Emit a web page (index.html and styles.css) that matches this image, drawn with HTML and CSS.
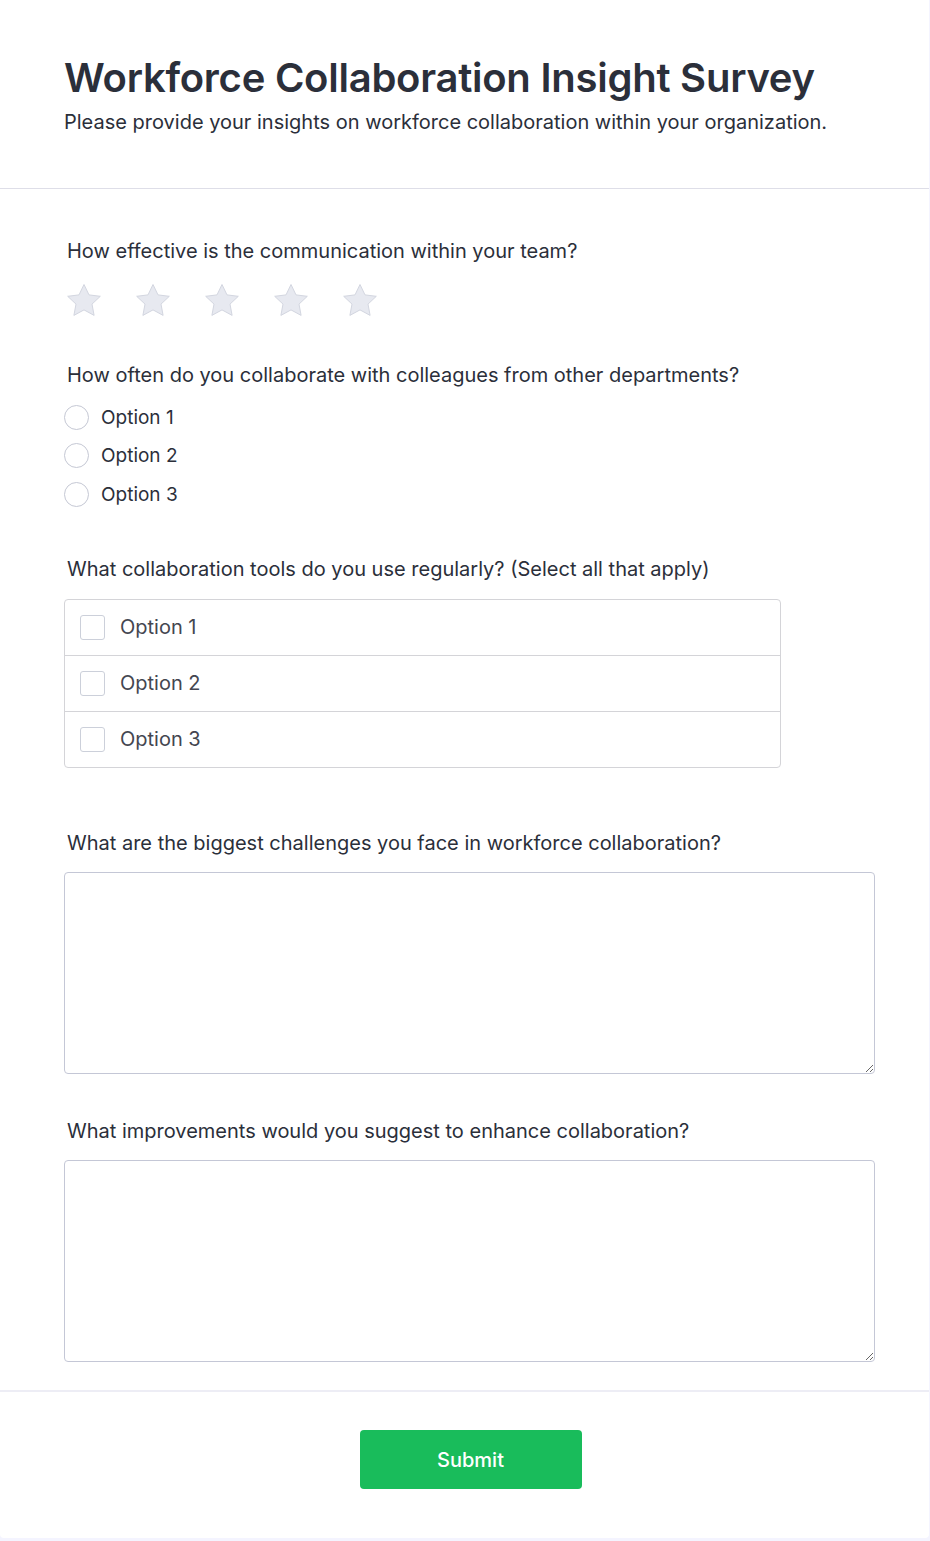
FILE: index.html
```html
<!DOCTYPE html>
<html lang="en">
<head>
<meta charset="utf-8">
<title>Workforce Collaboration Insight Survey</title>
<link rel="stylesheet" href="styles.css">
</head>
<body>
<div class="page">
  <form class="card">
    <header class="head">
      <h1 class="title">Workforce Collaboration Insight Survey</h1>
      <p class="subtitle">Please provide your insights on workforce collaboration within your organization.</p>
    </header>
    <div class="body">
      <section class="q q-rating">
        <h2 class="q-title">How effective is the communication within your team?</h2>
        <div class="stars">
          <svg class="star" viewBox="0 0 40 40"><path d="M20 3.5l5 10.4 11.3 1.4-8.3 7.8 2.1 11.3L20 28.9l-10.1 5.5 2.1-11.3-8.3-7.8 11.3-1.4z"/></svg>
          <svg class="star" viewBox="0 0 40 40"><path d="M20 3.5l5 10.4 11.3 1.4-8.3 7.8 2.1 11.3L20 28.9l-10.1 5.5 2.1-11.3-8.3-7.8 11.3-1.4z"/></svg>
          <svg class="star" viewBox="0 0 40 40"><path d="M20 3.5l5 10.4 11.3 1.4-8.3 7.8 2.1 11.3L20 28.9l-10.1 5.5 2.1-11.3-8.3-7.8 11.3-1.4z"/></svg>
          <svg class="star" viewBox="0 0 40 40"><path d="M20 3.5l5 10.4 11.3 1.4-8.3 7.8 2.1 11.3L20 28.9l-10.1 5.5 2.1-11.3-8.3-7.8 11.3-1.4z"/></svg>
          <svg class="star" viewBox="0 0 40 40"><path d="M20 3.5l5 10.4 11.3 1.4-8.3 7.8 2.1 11.3L20 28.9l-10.1 5.5 2.1-11.3-8.3-7.8 11.3-1.4z"/></svg>
        </div>
      </section>

      <section class="q q-radio">
        <h2 class="q-title">How often do you collaborate with colleagues from other departments?</h2>
        <div class="radios">
          <label class="radio"><span class="circle"></span><span>Option 1</span></label>
          <label class="radio"><span class="circle"></span><span>Option 2</span></label>
          <label class="radio"><span class="circle"></span><span>Option 3</span></label>
        </div>
      </section>

      <section class="q q-check">
        <h2 class="q-title">What collaboration tools do you use regularly? (Select all that apply)</h2>
        <div class="checks">
          <label class="check"><span class="box"></span><span>Option 1</span></label>
          <label class="check"><span class="box"></span><span>Option 2</span></label>
          <label class="check"><span class="box"></span><span>Option 3</span></label>
        </div>
      </section>

      <section class="q q-text">
        <h2 class="q-title">What are the biggest challenges you face in workforce collaboration?</h2>
        <textarea class="area"></textarea>
      </section>

      <section class="q q-text last">
        <h2 class="q-title">What improvements would you suggest to enhance collaboration?</h2>
        <textarea class="area"></textarea>
      </section>
    </div>
    <footer class="foot">
      <button type="button" class="submit">Submit</button>
    </footer>
  </form>
</div>
</body>
</html>
```

FILE: styles.css
```css
* { box-sizing: border-box; }
html, body { margin: 0; padding: 0; }
body {
  background: #f4f4ff;
  font-family: Inter, "Noto Sans", sans-serif;
  color: #2b2f3a;
}
.page {
  width: 930px;
  height: 1541px;
  padding: 0 1px 3px 0;
}
.card {
  background: #fff;
  height: 1538px;
  border-radius: 0 0 4px 4px;
  display: flex;
  flex-direction: column;
}
.head {
  padding: 52px 64px 0 64px;
  height: 189px;
  border-bottom: 1px solid #dedee8;
}
.title {
  margin: 0;
  font-size: 40px;
  font-weight: 600;
  line-height: 52px;
  letter-spacing: -0.25px;
  color: #2b2f3a;
}
.subtitle {
  margin: 4px 0 0 0;
  font-size: 20px;
  line-height: 28px;
  color: #2b2f3a;
}
.body {
  padding: 0 54px 0 64px;
  height: 1203px;
  border-bottom: 2px solid #ededf5;
}
.q-title {
  margin: 0;
  padding-left: 3px;
  font-size: 20px;
  font-weight: 400;
  line-height: 28px;
  color: #2b2f3a;
}
.q-rating { padding-top: 48px; }
.stars {
  display: flex;
  gap: 29px;
  margin-top: 16px;
}
.star { width: 40px; height: 40px; display: block; }
.star path {
  fill: #e7e9f0;
  stroke: #d3d6e0;
  stroke-width: 1;
  stroke-linejoin: round;
}
.q-radio { padding-top: 40px; }
.radios {
  display: flex;
  flex-direction: column;
  margin-top: 9px;
}
.radio {
  display: flex;
  align-items: center;
  gap: 12px;
  height: 38.5px;
  font-size: 19px;
  color: #2b2f3a;
}
.circle {
  width: 25px;
  height: 25px;
  border-radius: 50%;
  border: 1.5px solid #c5c8d4;
}
.q-check { padding-top: 41px; }
.checks {
  width: 717px;
  margin-top: 16px;
  border: 1px solid #d4d4d8;
  border-radius: 4px;
}
.check {
  display: flex;
  align-items: center;
  gap: 15px;
  height: 55px;
  padding-left: 15px;
  font-size: 20px;
  color: #444650;
}
.check + .check {
  height: 56px;
  border-top: 1px solid #d4d4d8;
}
.box {
  width: 25px;
  height: 25px;
  border: 1px solid #ccd0da;
  border-radius: 3px;
}
.q-text { padding-top: 61px; }
.q-text.last { padding-top: 43px; }
.area {
  display: block;
  width: 100%;
  height: 202px;
  margin-top: 15px;
  border: 1px solid #c4c7d6;
  border-radius: 4px;
  resize: vertical;
  font-family: inherit;
  background: #fff;
}
.foot {
  display: flex;
  justify-content: center;
  padding-top: 38px;
  padding-left: 12px;
}
.submit {
  width: 222px;
  height: 59px;
  background: #19bc5b;
  color: #fff;
  border: none;
  border-radius: 4px;
  font-family: inherit;
  font-size: 20px;
  font-weight: 500;
}
```
